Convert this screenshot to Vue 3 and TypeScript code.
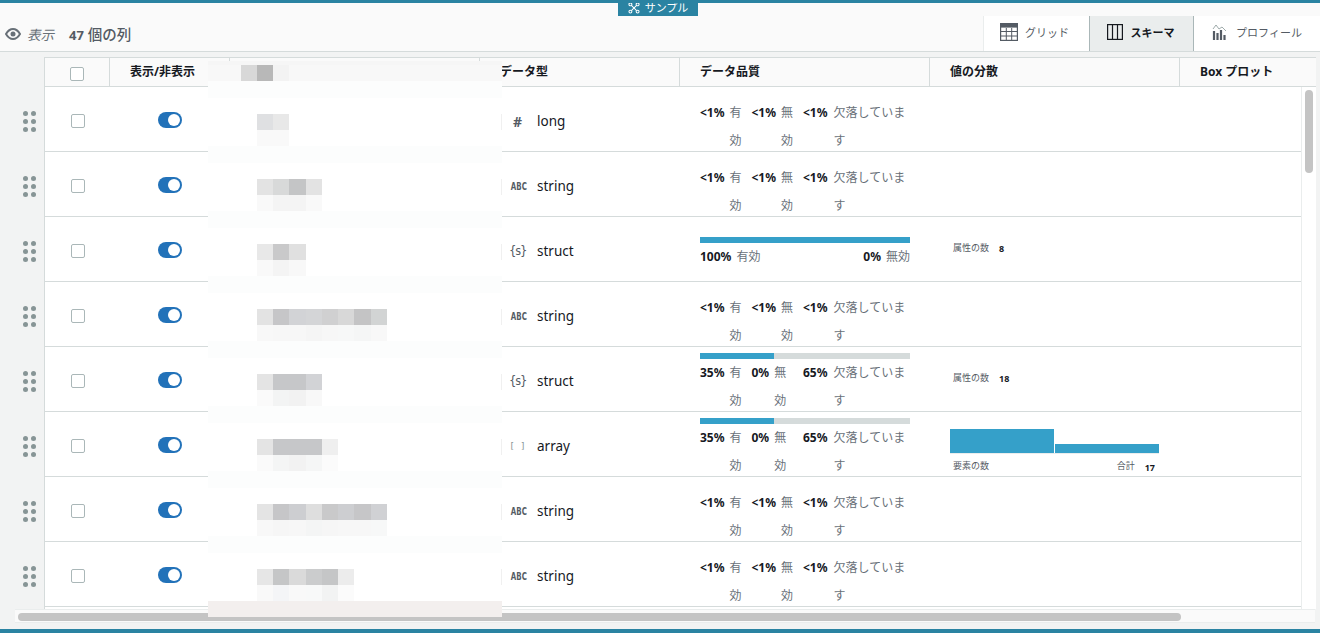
<script setup lang="ts">
type Dist =
  | { kind: 'attr'; value: string }
  | { kind: 'hist'; total: string; bars: number[] }
  | null

interface Quality {
  bar?: number
  full?: boolean
  valid: string
  invalid: string
  missing?: string
}

interface Row {
  icon: string
  iconClass: string
  type: string
  quality: Quality
  dist: Dist
}

const small: Quality = { valid: '<1%', invalid: '<1%', missing: '<1%' }
const partial: Quality = { bar: 35, valid: '35%', invalid: '0%', missing: '65%' }

const rows: Row[] = [
  { icon: '#', iconClass: 'num', type: 'long', quality: small, dist: null },
  { icon: 'ABC', iconClass: 'abc', type: 'string', quality: small, dist: null },
  {
    icon: '{s}',
    iconClass: 'obj',
    type: 'struct',
    quality: { bar: 100, full: true, valid: '100%', invalid: '0%' },
    dist: { kind: 'attr', value: '8' },
  },
  { icon: 'ABC', iconClass: 'abc', type: 'string', quality: small, dist: null },
  { icon: '{s}', iconClass: 'obj', type: 'struct', quality: partial, dist: { kind: 'attr', value: '18' } },
  { icon: '[ ]', iconClass: 'arr', type: 'array', quality: partial, dist: { kind: 'hist', total: '17', bars: [24, 9] } },
  { icon: 'ABC', iconClass: 'abc', type: 'string', quality: small, dist: null },
  { icon: 'ABC', iconClass: 'abc', type: 'string', quality: small, dist: null },
]

// blurred-out column name: rows of the mosaic, first colour sits at column 3
const mosaic: { row: number; start: number; colors: string[] }[] = [
  { row: 1, start: 2, colors: ['#d8d8d8', '#b8b8b8', '#f3f3f3'] },
  { row: 4, start: 3, colors: ['#dfe0e2', '#e8e8e8'] },
  { row: 5, start: 3, colors: ['#f9f9f9', '#f9f9f9'] },
  { row: 8, start: 3, colors: ['#e3e3e3', '#d8d9d9', '#c4c5c6', '#e3e3e3'] },
  { row: 9, start: 3, colors: ['#f9f9f9', '#f4f4f4', '#f4f4f4', '#f9f9f9'] },
  { row: 12, start: 3, colors: ['#e8e8e8', '#c9c9ca', '#e0e0e0'] },
  { row: 13, start: 3, colors: ['#f9f9f9', '#f4f4f4', '#f8f8f8'] },
  { row: 16, start: 3, colors: ['#e3e3e3', '#c6c6c8', '#d2d3d6', '#d4d5d7', '#d0d0d1', '#d8d8d8', '#c4c4c5', '#d2d4d4'] },
  { row: 17, start: 3, colors: ['#f8f8f8', '#f7f7f7', '#f7f7f7', '#f5f5f5', '#f7f7f7', '#f7f8f8', '#f5f6f6', '#f8f8f8'] },
  { row: 20, start: 3, colors: ['#e4e4e4', '#c6c7c9', '#c6c7c9', '#d2d3d6'] },
  { row: 21, start: 3, colors: ['#fafafa', '#f3f4f4', '#f2f2f2', '#f8f8f8'] },
  { row: 24, start: 3, colors: ['#e4e4e4', '#c6c7c9', '#c6c7c9', '#c6c7c9', '#efefef'] },
  { row: 25, start: 3, colors: ['#fafafa', '#f4f5f5', '#f2f2f2', '#f5f6f6', '#fbfbfb'] },
  { row: 28, start: 3, colors: ['#e4e4e4', '#c6c6c8', '#cdced1', '#dedede', '#c9c9ca', '#cdced1', '#c6c6c8', '#d0d1d4'] },
  { row: 29, start: 3, colors: ['#f8f8f8', '#f6f6f6', '#f7f7f7', '#f4f5f5', '#f6f6f6', '#f7f7f7', '#f7f7f7', '#f7f8f8'] },
  { row: 32, start: 3, colors: ['#e6e6e6', '#c5c6c7', '#dadada', '#cbcccd', '#c5c6c7', '#ececec'] },
  { row: 33, start: 3, colors: ['#f9f9f9', '#f4f5f7', '#f9f9f9', '#f8f9f9', '#f2f3f3', '#fbfbfb'] },
]

const blocks = mosaic.flatMap((line) =>
  line.colors.map((color, i) => ({
    key: `${line.row}-${i}`,
    style: { gridRow: line.row, gridColumn: line.start + i + 1, background: color },
  })),
)

// faint bands where the table borders got smeared, and the stubs on the right edge
const bands = [1, 2, 6, 10, 14, 18, 22, 26, 30]
const stubs = [4, 8, 12, 16, 20, 24, 28, 32]
</script>

<template>
  <div class="page">
    <div class="sample-tag">
      <svg class="sample-icon" viewBox="0 0 14 14" width="12" height="12">
        <g fill="none" stroke="#fff" stroke-width="1.2">
          <circle cx="2.8" cy="2.8" r="1.7" />
          <circle cx="11.2" cy="2.8" r="1.7" />
          <circle cx="2.8" cy="11.2" r="1.7" />
          <circle cx="11.2" cy="11.2" r="1.7" />
          <path d="M4 4l6 6M10 4l-6 6" />
        </g>
      </svg>
      <span>サンプル</span>
    </div>

    <div class="toolbar">
      <div class="view-info">
        <svg class="eye" viewBox="0 0 16 12" width="16" height="12">
          <path d="M1 6c2-3.4 4.400-5 7-5s5 1.600 7 5c-2 3.400-4.400 5-7 5S3 9.400 1 6z" fill="none" stroke="#687078" stroke-width="2" />
          <circle cx="8" cy="6" r="2.500" fill="#687078" />
        </svg>
        <span class="view-label">表示</span>
        <span class="view-count"><b>47</b> 個の列</span>
      </div>
      <div class="tabs">
        <div class="tab">
          <svg viewBox="0 0 18 18" width="18" height="18">
            <rect x=".6" y=".6" width="16.800" height="16.800" fill="none" stroke="#545b64" stroke-width="1.200" />
            <rect x=".6" y=".6" width="16.800" height="4" fill="#545b64" />
            <path d="M1 8.500h16M1 13h16M6.300 5v12M11.700 5v12" stroke="#545b64" stroke-width="1" />
          </svg>
          <span>グリッド</span>
        </div>
        <div class="tab active">
          <svg viewBox="0 0 16 16" width="16" height="16">
            <rect x=".6" y=".6" width="14.800" height="14.800" fill="none" stroke="#16191f" stroke-width="1.200" />
            <path d="M5.500 .6v14.800M10.500 .6v14.800" stroke="#16191f" stroke-width="1.200" />
          </svg>
          <span>スキーマ</span>
        </div>
        <div class="tab wide">
          <svg viewBox="0 0 15 16" width="15" height="16">
            <path d="M2 16V7M5.500 16V9M9 16V6M12.500 16v-5" stroke="#545b64" stroke-width="2.200" />
            <path d="M1 5l3-4 3 4 3-2 4 4" fill="none" stroke="#879596" stroke-width=".8" />
          </svg>
          <span>プロフィール</span>
        </div>
      </div>
    </div>

    <div class="content">
      <div class="table">
        <div class="head">
          <div class="th check"><span class="checkbox head-box"></span></div>
          <div class="th col-toggle">表示/非表示</div>
          <div class="th col-name"></div>
          <div class="th col-type">データ型</div>
          <div class="th col-quality">データ品質</div>
          <div class="th col-dist">値の分散</div>
          <div class="th col-box">Box プロット</div>
        </div>

        <div class="body">
          <div class="rows">
            <div v-for="(row, i) in rows" :key="i" class="row">
              <div class="grip"><i v-for="n in 6" :key="n"></i></div>
              <div class="td check"><span class="checkbox"></span></div>
              <div class="td col-toggle"><span class="toggle"><i></i></span></div>
              <div class="td col-name"></div>
              <div class="td col-type">
                <span class="type-icon" :class="row.iconClass">{{ row.icon }}</span>
                <span class="type-name">{{ row.type }}</span>
              </div>
              <div class="td col-quality">
                <div class="bar" :class="{ 'bar-on': row.quality.bar }">
                  <div v-if="row.quality.bar" class="bar-fill" :style="{ width: row.quality.bar + '%' }"></div>
                </div>
                <div class="stats" :class="{ spread: row.quality.full }">
                  <div class="stat" :class="{ long: row.quality.full }">
                    <b>{{ row.quality.valid }}</b><span>有効</span>
                  </div>
                  <div class="stat" :class="{ long: row.quality.full }">
                    <b>{{ row.quality.invalid }}</b><span>無効</span>
                  </div>
                  <div v-if="row.quality.missing" class="stat last">
                    <b>{{ row.quality.missing }}</b><span>欠落しています</span>
                  </div>
                </div>
              </div>
              <div class="td col-dist">
                <div v-if="row.dist && row.dist.kind === 'attr'" class="attr">
                  <span>属性の数</span><b>{{ row.dist.value }}</b>
                </div>
                <div v-else-if="row.dist && row.dist.kind === 'hist'" class="hist">
                  <div class="hist-bars">
                    <div v-for="(h, b) in row.dist.bars" :key="b" class="hist-bar" :style="{ height: h + 'px' }"></div>
                  </div>
                  <div class="hist-foot">
                    <span>要素の数</span>
                    <span class="hist-total">合計<b>{{ row.dist.total }}</b></span>
                  </div>
                </div>
              </div>
              <div class="td col-box"></div>
            </div>
            <div class="row-clip"></div>
          </div>
          <div class="vscroll"><div class="vthumb"></div></div>
        </div>
      </div>

      <div class="hscroll"><div class="hthumb"></div></div>
    </div>

    <div class="mosaic">
      <div v-for="b in bands" :key="'b' + b" class="band" :style="{ gridRow: b }"></div>
      <div class="tail"></div>
      <div v-for="s in stubs" :key="'s' + s" class="stub" :style="{ gridRow: s }"></div>
      <div v-for="b in blocks" :key="b.key" class="block" :style="b.style"></div>
    </div>
  </div>
</template>

<style>
html,
body {
  margin: 0;
  overflow: hidden;
}
</style>

<style scoped>
.page {
  position: relative;
  box-sizing: border-box;
  width: 1320px;
  height: 633px;
  display: flex;
  flex-direction: column;
  background: #f2f3f3;
  border-top: 3px solid #2a83a2;
  border-bottom: 4px solid #2a83a2;
  overflow: hidden;
  font-family: "Noto Sans", "Noto Sans CJK JP", sans-serif;
  color: #16191f;
}

.sample-tag {
  position: absolute;
  top: -3px;
  left: 618px;
  width: 80px;
  height: 16px;
  display: flex;
  align-items: center;
  justify-content: center;
  gap: 5px;
  background: #2a83a2;
  color: #fff;
  font-size: 11px;
  line-height: 16px;
}

.toolbar {
  height: 49px;
  flex: none;
  box-sizing: border-box;
  display: flex;
  justify-content: space-between;
  align-items: flex-end;
  background: #fafafa;
  border-bottom: 1px solid #d5dbdb;
}

.view-info {
  display: flex;
  align-items: center;
  height: 35px;
  padding-left: 5px;
}

.eye {
  margin-right: 6px;
}

.view-label {
  width: 42px;
  font-size: 13.500px;
  font-style: italic;
  color: #687078;
}

.view-count {
  font-size: 14.500px;
  color: #545b64;
  font-weight: 500;
}

.view-count b {
  font-size: 13px;
  font-weight: 700;
}

.tabs {
  display: flex;
  height: 35px;
}

.tab {
  box-sizing: border-box;
  width: 106px;
  padding: 0 4px 3px 0;
  display: flex;
  align-items: center;
  justify-content: center;
  gap: 7px;
  background: #fff;
  font-size: 11px;
  color: #545b64;
  border-left: 1px solid #eaeded;
}

.tab.active {
  width: 105px;
  padding-right: 2px;
  background: #eaeded;
  border-left: 1px solid #aab7b8;
  border-right: 1px solid #aab7b8;
  color: #16191f;
  font-weight: 700;
  gap: 8px;
}

.tab.wide {
  width: 126px;
  border-left: 0;
  gap: 9px;
  padding: 0 0 3px;
}

.content {
  flex: 1;
  min-height: 0;
  padding-top: 5px;
  display: flex;
  flex-direction: column;
}

.table {
  box-sizing: border-box;
  padding-left: 44px;
  width: 1316px;
  height: 552px;
  flex: none;
  overflow: hidden;
}

.head {
  display: flex;
  height: 30px;
  box-sizing: border-box;
  background: #fafafa;
  border-top: 1px solid #d5dbdb;
  border-bottom: 1px solid #d5dbdb;
  border-left: 1px solid #d5dbdb;
}

.th {
  box-sizing: border-box;
  padding-left: 20px;
  border-right: 1px solid #d5dbdb;
  font-size: 12px;
  font-weight: 700;
  line-height: 27px;
  white-space: nowrap;
}

.th.check {
  padding: 0;
}

.th.col-box {
  flex: 1;
  border-right: 0;
}

.check {
  width: 65px;
  flex: none;
  display: flex;
  align-items: center;
  justify-content: center;
}

.td.check {
  padding-top: 4px;
}

.col-toggle {
  width: 120px;
  flex: none;
}

.col-name {
  width: 250px;
  flex: none;
}

.col-type {
  width: 200px;
  flex: none;
}

.col-quality {
  width: 250px;
  flex: none;
}

.col-dist {
  width: 250px;
  flex: none;
}

.col-box {
  width: 121px;
}

.checkbox {
  display: block;
  box-sizing: border-box;
  width: 14px;
  height: 14px;
  background: #fff;
  border: 1px solid #aab7b8;
  border-radius: 2px;
}

.head-box {
  margin: 4px 0 0 -1px;
}

.body {
  display: flex;
  height: 522px;
  background: #fff;
}

.rows {
  width: 1258px;
  flex: none;
  box-sizing: border-box;
  border-left: 1px solid #d5dbdb;
  border-right: 1px solid #eaeded;
}

.row {
  position: relative;
  display: flex;
  height: 65px;
  box-sizing: border-box;
  border-bottom: 1px solid #d5dbdb;
}

.row-clip {
  height: 2px;
  border-bottom: 1px solid #d5dbdb;
}

.grip {
  position: absolute;
  left: -22px;
  top: 24px;
  display: grid;
  grid-template-columns: 5px 5px;
  grid-auto-rows: 5px;
  column-gap: 3px;
  row-gap: 3px;
}

.grip i {
  border-radius: 50%;
  background: #879596;
}

.td {
  box-sizing: border-box;
}

.toggle {
  display: block;
  box-sizing: border-box;
  position: relative;
  width: 24px;
  height: 16px;
  margin: 25px 0 0 48px;
  border-radius: 8px;
  background: #2272b9;
}

.toggle i {
  position: absolute;
  top: 2px;
  right: 2px;
  width: 12px;
  height: 12px;
  border-radius: 50%;
  background: #fff;
}

.col-type.td {
  display: flex;
  align-items: center;
  padding: 4px 0 0 29px;
}

.type-icon {
  width: 17px;
  margin-right: 11px;
  text-align: center;
  color: #545b64;
  white-space: nowrap;
}

.type-icon.num {
  font-size: 14px;
  font-weight: 700;
}

.type-icon.abc {
  font-family: "DejaVu Sans Condensed", "DejaVu Sans", sans-serif;
  font-size: 10px;
  font-weight: 700;
  transform: scaleX(0.78);
}

.type-icon.obj {
  font-family: "DejaVu Sans Mono", monospace;
  font-size: 11.500px;
  letter-spacing: -1.500px;
}

.type-icon.arr {
  font-family: "DejaVu Sans Mono", monospace;
  font-size: 9px;
  color: #879596;
}

.type-name {
  font-size: 13.500px;
  line-height: 20px;
}

.col-quality.td {
  display: flex;
  flex-direction: column;
  justify-content: center;
  padding: 10px 20px 0 20px;
}

.bar {
  height: 6px;
  flex: none;
}

.bar-on {
  background: #d5dbdb;
}

.bar-fill {
  height: 100%;
  background: #35a0c9;
}

.stats {
  display: flex;
  flex: none;
  font-size: 12px;
  line-height: 28px;
  color: #687078;
}

.stats.spread {
  justify-content: space-between;
}

.stat {
  display: flex;
  width: 51.500px;
}

.stat b {
  flex: none;
  margin-right: 5px;
  font-size: 12px;
  color: #16191f;
}

.stat span {
  width: 14px;
}

.stat.long {
  width: auto;
}

.stat.long span {
  width: auto;
}

.stat.last {
  flex: 1;
}

.stat.last b {
  margin-right: 6px;
}

.stat.last span {
  width: 73px;
}

.col-dist.td {
  display: flex;
  flex-direction: column;
  justify-content: center;
  padding-left: 20px;
}

.attr {
  display: flex;
  align-items: center;
  padding-left: 3px;
  margin-top: -4px;
  font-size: 9px;
  color: #545b64;
}

.attr b {
  margin-left: 10px;
  margin-top: 3px;
  color: #16191f;
}

.hist {
  width: 209px;
  padding-top: 12px;
}

.hist-bars {
  display: flex;
  align-items: flex-end;
  gap: 1px;
  height: 25px;
  border-bottom: 1px solid #eaeded;
}

.hist-bar {
  flex: 1;
  background: #35a0c9;
}

.hist-foot {
  display: flex;
  justify-content: space-between;
  padding: 5px 0 0 3px;
  font-size: 9px;
  line-height: 14px;
  color: #545b64;
}

.hist-total b {
  margin-left: 10px;
  margin-right: 4px;
  position: relative;
  top: 2px;
  color: #16191f;
}

.vscroll {
  flex: 1;
  background: #fff;
  padding: 3px 3px 0;
}

.vthumb {
  height: 83px;
  background: #c4c4c4;
  border-radius: 4px;
}

.hscroll {
  flex: none;
  box-sizing: border-box;
  height: 14px;
  margin-left: 15px;
  width: 1300px;
  padding: 3px 0 0 3px;
  background: #fafafa;
  border-top: 1px solid #eaeded;
  border-bottom: 1px solid #eaeded;
}

.hthumb {
  width: 1163px;
  height: 8px;
  background: #c4c4c4;
  border-radius: 4px;
}

.mosaic {
  position: absolute;
  left: 208px;
  top: 58px;
  width: 294px;
  height: 556px;
  box-sizing: border-box;
  padding-top: 4px;
  overflow: hidden;
  display: grid;
  grid-template-columns: repeat(19, 16.250px);
  grid-auto-rows: 16.250px;
  background: linear-gradient(#f6f6f6 0 4px, #fff 4px);
}

.band {
  grid-column: 1 / -1;
  background: #fcfdfd;
}

.band:first-child {
  background: #f8f8f8;
}

.tail {
  grid-row: 34;
  grid-column: 1 / -1;
  background: #f3efee;
}

.stub {
  grid-column: 19;
  background: #f0f0f0;
}

.block {
  min-width: 0;
}
</style>
